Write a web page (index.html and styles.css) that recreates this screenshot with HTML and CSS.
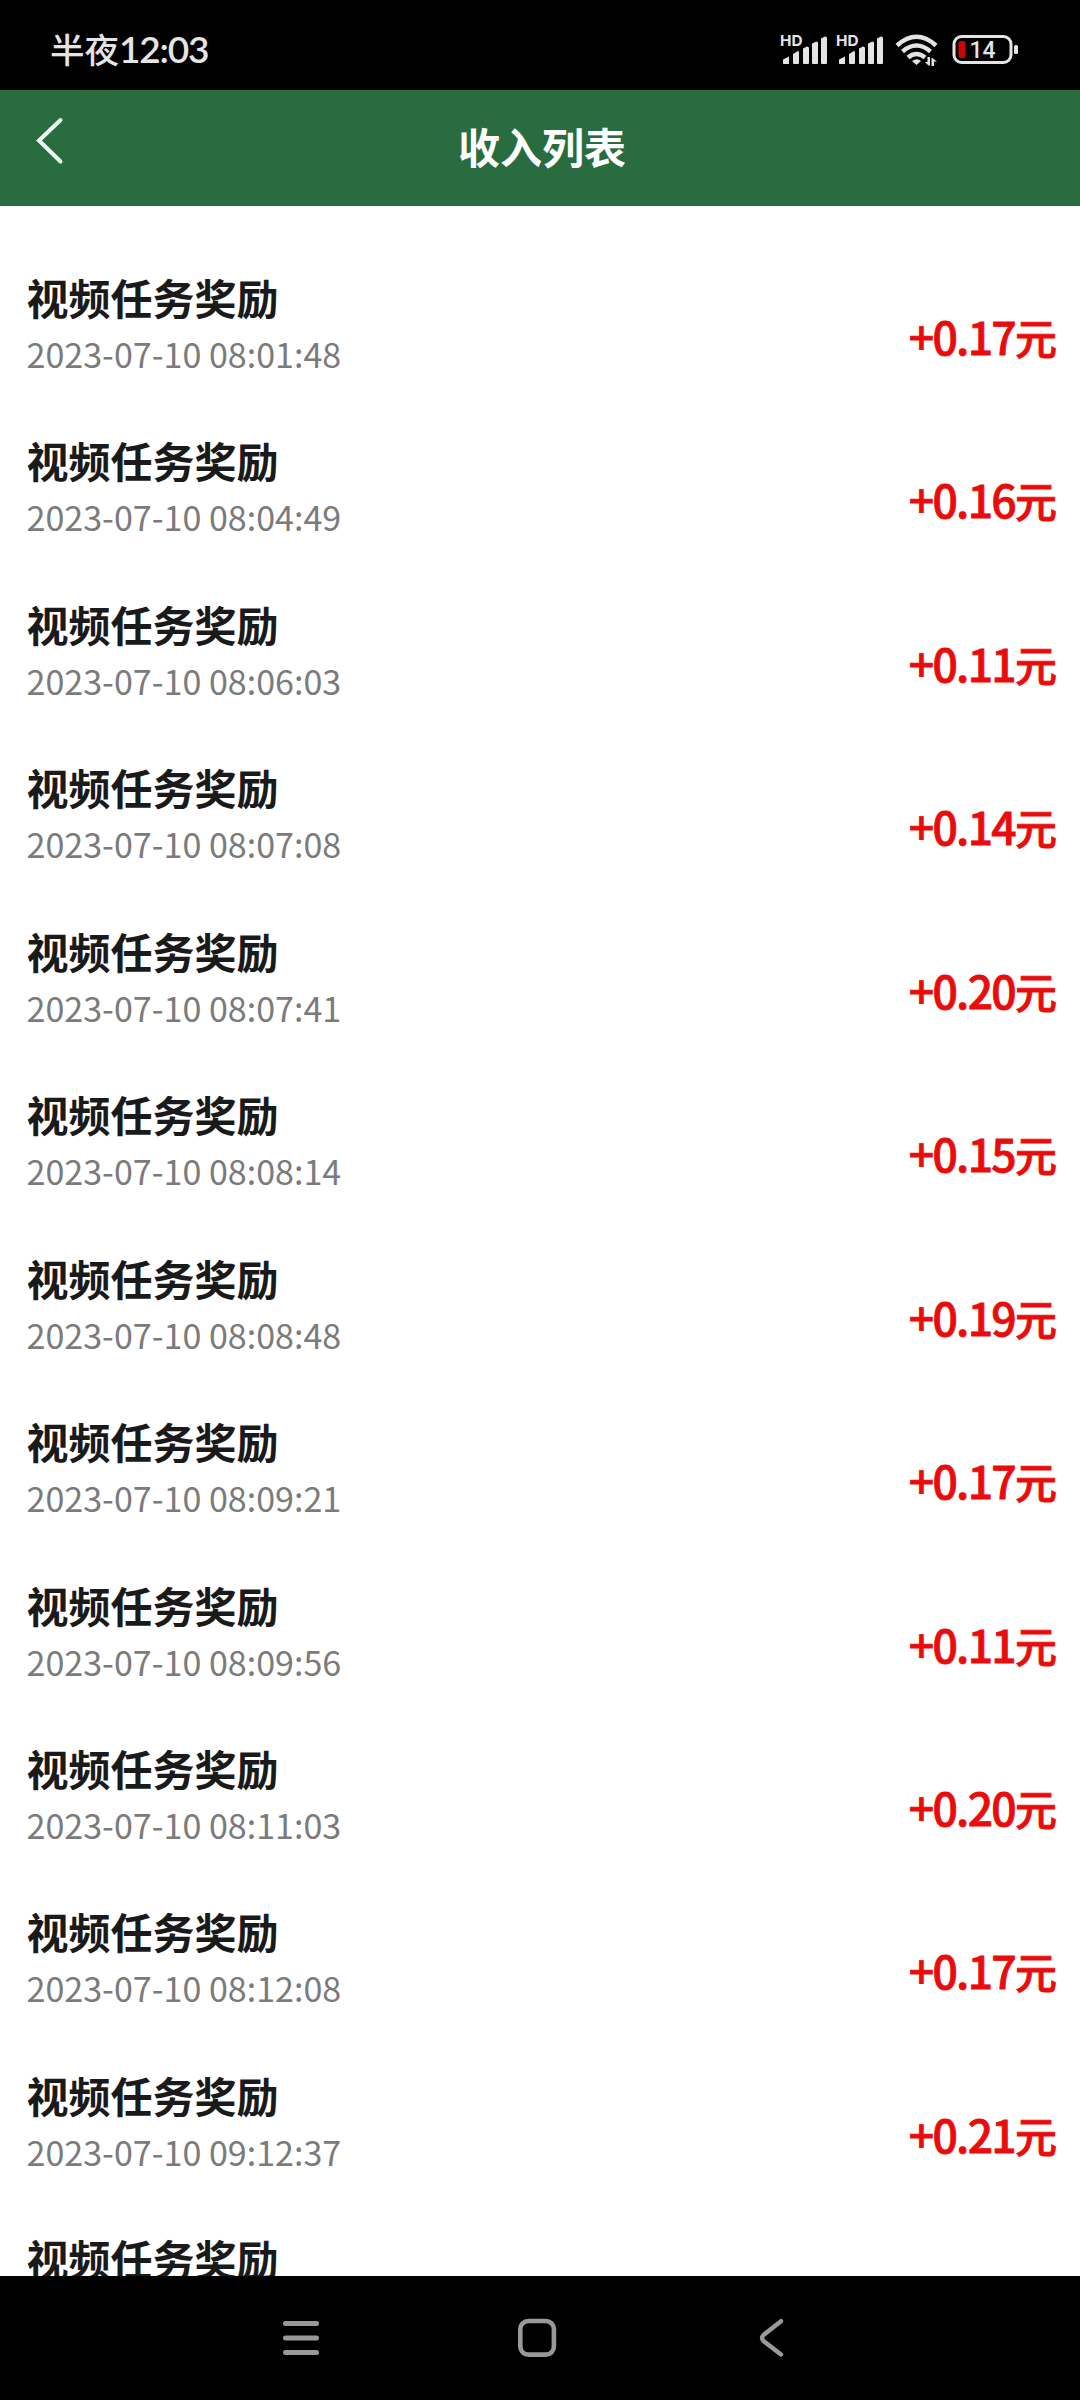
FILE: index.html
```html
<!DOCTYPE html>
<html lang="zh-CN">
<head>
<meta charset="utf-8">
<title>收入列表</title>
<link rel="stylesheet" href="styles.css">
</head>
<body>
<div class="status">
  <div class="clock">半夜<span class="clock-time">12:03</span></div>
  <svg class="status-icons" width="260" height="40" viewBox="0 0 260 40">
    <g id="signal" fill="#e4e4e4">
      <text class="hd" x="0" y="15.6" textLength="22.5" lengthAdjust="spacingAndGlyphs">HD</text>
      <path d="M3 33.500v-4l6-3v7.500h-5.500zM13 24l5-3q1 0 1 1v11q0 1-1 1h-4q-1 0-1-1zM23 18.500l4-2q2 0 2 1.500v15q0 1-1 1h-4q-1 0-1-1zM32 13.500l4.500-2q1.500 0 1.500 1.500v20q0 1-1 1h-4q-1 0-1-1zM41 8.500l4-2q2 0 2 1.500v25q0 1-1 1h-4q-1 0-1-1z"/>
    </g>
    <use href="#signal" x="56"/>
    <g fill="none" stroke="#e4e4e4" stroke-width="4.500">
      <path d="M117 15.500q19.500-17.500 39 0"/>
      <path d="M122.500 21.500q14-12 28 0"/>
      <path d="M128 27.500q8.500-7 17 0"/>
    </g>
    <path d="M132 31q5-3.500 9 0l-4.500 4zM145 32h2.500v-5h2.500v8.500h-1.500zM151.500 36V27.500l5.500 4h-3v4.500z" fill="#e4e4e4"/>
    <rect x="174" y="6.500" width="57" height="26" rx="7.500" fill="none" stroke="#e4e4e4" stroke-width="3"/>
    <rect x="178.500" y="11" width="7" height="17" rx="2.500" fill="#c90606"/>
    <rect x="234" y="15" width="4" height="9" rx="1.500" fill="#e4e4e4"/>
    <text class="battery" x="189.500" y="27.500">14</text>
  </svg>
</div>
<header class="header">
  <svg class="back" width="36" height="56" viewBox="0 0 36 56"><path d="M30.500 6L9 26.500l21.500 21" fill="none" stroke="#f0fff4" stroke-width="4" stroke-linecap="round"/></svg>
  <h1 class="title">收入列表</h1>
</header>
<main class="list">
  <div class="row"><div><div class="name">视频任务奖励</div><div class="date">2023-07-10 08:01:48</div></div><div class="amount">+0.17<span class="unit">元</span></div></div>
  <div class="row"><div><div class="name">视频任务奖励</div><div class="date">2023-07-10 08:04:49</div></div><div class="amount">+0.16<span class="unit">元</span></div></div>
  <div class="row"><div><div class="name">视频任务奖励</div><div class="date">2023-07-10 08:06:03</div></div><div class="amount">+0.11<span class="unit">元</span></div></div>
  <div class="row"><div><div class="name">视频任务奖励</div><div class="date">2023-07-10 08:07:08</div></div><div class="amount">+0.14<span class="unit">元</span></div></div>
  <div class="row"><div><div class="name">视频任务奖励</div><div class="date">2023-07-10 08:07:41</div></div><div class="amount">+0.20<span class="unit">元</span></div></div>
  <div class="row"><div><div class="name">视频任务奖励</div><div class="date">2023-07-10 08:08:14</div></div><div class="amount">+0.15<span class="unit">元</span></div></div>
  <div class="row"><div><div class="name">视频任务奖励</div><div class="date">2023-07-10 08:08:48</div></div><div class="amount">+0.19<span class="unit">元</span></div></div>
  <div class="row"><div><div class="name">视频任务奖励</div><div class="date">2023-07-10 08:09:21</div></div><div class="amount">+0.17<span class="unit">元</span></div></div>
  <div class="row"><div><div class="name">视频任务奖励</div><div class="date">2023-07-10 08:09:56</div></div><div class="amount">+0.11<span class="unit">元</span></div></div>
  <div class="row"><div><div class="name">视频任务奖励</div><div class="date">2023-07-10 08:11:03</div></div><div class="amount">+0.20<span class="unit">元</span></div></div>
  <div class="row"><div><div class="name">视频任务奖励</div><div class="date">2023-07-10 08:12:08</div></div><div class="amount">+0.17<span class="unit">元</span></div></div>
  <div class="row"><div><div class="name">视频任务奖励</div><div class="date">2023-07-10 09:12:37</div></div><div class="amount">+0.21<span class="unit">元</span></div></div>
  <div class="row"><div><div class="name">视频任务奖励</div></div></div>
</main>
<nav class="nav">
  <svg width="44" height="44" viewBox="0 0 44 44"><path d="M6.500 7.500h31M6.500 22h31M6.500 36.600h31" stroke="#999" stroke-width="5" stroke-linecap="round"/></svg>
  <svg width="44" height="44" viewBox="0 0 44 44"><rect x="4.300" y="5" width="33.600" height="33.600" rx="8" fill="none" stroke="#999" stroke-width="4.600"/></svg>
  <svg width="44" height="44" viewBox="0 0 44 44"><path d="M28 5.200L10.500 19q-3 3 0 6L28 38.500" fill="none" stroke="#999" stroke-width="4.400" stroke-linecap="round"/></svg>
</nav>
</body>
</html>
```
FILE: styles.css
```css
* { box-sizing: border-box; }

body {
  margin: 0;
  width: 1080px;
  height: 2400px;
  display: flex;
  flex-direction: column;
  overflow: hidden;
  background: #fff;
  font-family: "Noto Sans CJK SC", sans-serif;
}

.status {
  flex: none;
  height: 90px;
  padding: 0 40px 0 50px;
  display: flex;
  justify-content: space-between;
  align-items: flex-start;
  background: #000;
  color: #e4e4e4;
}

.clock {
  padding-top: 23px;
  font-size: 34.5px;
  font-weight: 500;
  line-height: 50px;
  white-space: nowrap;
}

.clock-time {
  font-family: Lato, sans-serif;
  font-size: 37px;
  font-weight: 600;
  letter-spacing: -1.200px;
}

.status-icons { margin-top: 30px; }

.hd {
  font: 700 15px Inter, sans-serif;
}

.battery {
  font: 500 23px Roboto, sans-serif;
  fill: #e4e4e4;
}

.header {
  flex: none;
  height: 116px;
  padding: 0 28px 0 30px;
  display: grid;
  grid-template-columns: 36px 1fr 34px;
  background: #296c3f;
}

.back { margin-top: 24px; }

.title {
  margin: 0;
  padding-top: 26px;
  color: #fff;
  font-size: 42px;
  font-weight: 700;
  line-height: 60px;
  text-align: center;
}

.list {
  flex: 1;
  min-height: 0;
  padding: 61px 23px 0 26.500px;
  overflow: hidden;
}

.row {
  height: 163.450px;
  display: flex;
  justify-content: space-between;
}

.name {
  color: #1a1a1a;
  font-size: 42px;
  font-weight: 700;
  line-height: 60px;
}

.date {
  padding-top: 1px;
  color: #7b7b7b;
  font-size: 34.050px;
  line-height: 52px;
}

.amount {
  padding-top: 39px;
  color: #e90c0c;
  font-size: 44.500px;
  font-weight: 500;
  line-height: 60px;
  letter-spacing: -1.700px;
  white-space: nowrap;
  -webkit-text-stroke: .8px #e90c0c;
}

.unit {
  font-size: 42px;
  letter-spacing: 0;
}

.nav {
  flex: none;
  height: 124px;
  padding: 40px 283px 0 279px;
  display: flex;
  justify-content: space-between;
  background: #000;
}
```
